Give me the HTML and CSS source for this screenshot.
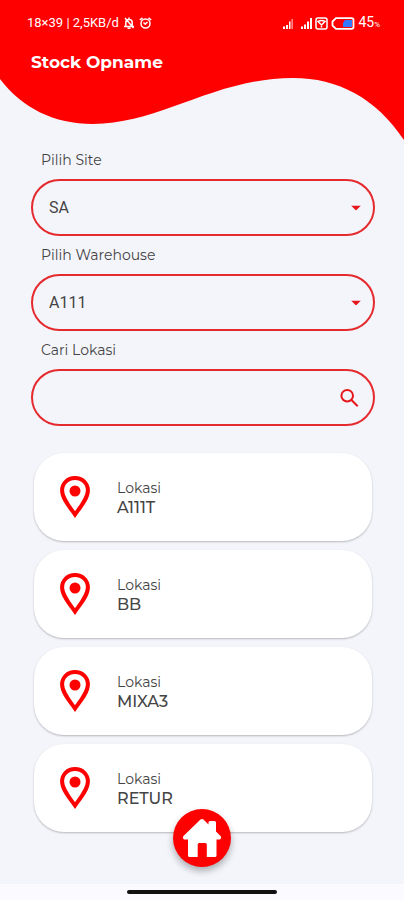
FILE: index.html
```html
<!DOCTYPE html>
<html lang="id">
<head>
<meta charset="utf-8">
<meta name="viewport" content="width=device-width, initial-scale=1">
<title>Stock Opname</title>
<link rel="stylesheet" href="styles.css">
</head>
<body>
<svg class="sprite" aria-hidden="true">
  <symbol id="pin" viewBox="0 0 30 44">
    <path d="M15 3C7.500 3 2.100 8.500 2.100 15.500C2.100 23.500 10 32.500 15 39.500C20 32.500 27.900 23.500 27.900 15.500C27.900 8.500 22.500 3 15 3Z" fill="none" stroke="#fe0000" stroke-width="4"/>
    <circle cx="15" cy="16" r="5.500" fill="#fe0000"/>
  </symbol>
</svg>
<div class="app">
  <header class="header">
    <svg class="wave" viewBox="0 0 404 140" preserveAspectRatio="none" aria-hidden="true">
      <path d="M0 0H404V140C376 98 338 78 293 78C215 78 160 124 93 124C54 124 22 108 0 79Z" fill="#fe0000"/>
    </svg>
    <div class="status">
      <div class="status-group">
        <span>18×39 | 2,5KB/d</span>
        <svg width="12" height="12" viewBox="0 0 12 12" fill="none" stroke="#fff" stroke-width="1.500" aria-hidden="true">
          <path d="M1 9.500H11M2.800 9V5.500C2.800 1.500 9.200 1.500 9.200 5.500V9M4.500 11.300H7.500M6 .5V2M2 1L10.500 11"/>
        </svg>
        <svg width="13" height="12" viewBox="0 0 13 12" fill="none" stroke="#fff" stroke-width="1.500" aria-hidden="true">
          <circle cx="6.500" cy="6.500" r="4.500"/><path d="M.8 3L3.500 .8M12.200 3L9.500 .8M4.500 5.500L6.300 7.200L8.500 5"/>
        </svg>
      </div>
      <div class="status-group">
        <svg width="11" height="11" viewBox="0 0 11 11" fill="#fff" aria-hidden="true"><path d="M0 8.500H2V11H0ZM3 7H5V11H3ZM6 3.500H7.500V11H6Z"/><path d="M8.300 1H10V11H8.300Z" opacity=".5"/></svg>
        <svg class="signal" width="11" height="11" viewBox="0 0 11 11" fill="#fff" aria-hidden="true"><path d="M0 8.500H2V11H0ZM3 6.500H5V11H3ZM6 3.500H8V11H6ZM9 0H11V11H9Z"/></svg>
        <svg width="13" height="13" viewBox="0 0 13 13" fill="none" stroke="#fff" stroke-width="1.500" aria-hidden="true"><rect x="1" y="1" width="11" height="11" rx="2"/><path d="M3 4.500Q6.500 2.500 10 4.500L6.500 8ZM6.500 7V10.500"/></svg>
        <svg width="24" height="13" viewBox="0 0 24 13" aria-hidden="true"><path d="M5 1.200H20.500Q22.500 1.200 22.500 3V10Q22.500 11.800 20.500 11.800H5L1.500 8.500V4.500Z" fill="none" stroke="#fff" stroke-width="1.800"/><path d="M14 3H21V10H12V6Z" fill="#3478ff"/></svg>
        <span class="battery">45<small>%</small></span>
      </div>
    </div>
    <h1 class="title">Stock Opname</h1>
  </header>
  <main class="content">
    <form class="filters">
      <label class="label" for="site">Pilih Site</label>
      <div class="field">
        <select id="site" class="control"><option>SA</option></select>
        <svg class="arrow" width="10" height="5" viewBox="0 0 10 5" aria-hidden="true"><path d="M0 0H10L5 5Z" fill="#e5171b"/></svg>
      </div>
      <label class="label" for="warehouse">Pilih Warehouse</label>
      <div class="field">
        <select id="warehouse" class="control"><option>A111</option></select>
        <svg class="arrow" width="10" height="5" viewBox="0 0 10 5" aria-hidden="true"><path d="M0 0H10L5 5Z" fill="#e5171b"/></svg>
      </div>
      <label class="label" for="search">Cari Lokasi</label>
      <div class="field">
        <input id="search" class="control" type="text">
        <svg class="search" width="19" height="19" viewBox="0 0 19 19" fill="none" stroke="#e5171b" stroke-width="2" aria-hidden="true"><circle cx="7.200" cy="7.200" r="5.800"/><path d="M11.500 11.500L17.700 17.700"/></svg>
      </div>
    </form>
    <ul class="list">
      <li class="card"><svg class="pin" aria-hidden="true"><use href="#pin"/></svg><div class="text"><p class="caption">Lokasi</p><p class="name">A111T</p></div></li>
      <li class="card"><svg class="pin" aria-hidden="true"><use href="#pin"/></svg><div class="text"><p class="caption">Lokasi</p><p class="name">BB</p></div></li>
      <li class="card"><svg class="pin" aria-hidden="true"><use href="#pin"/></svg><div class="text"><p class="caption">Lokasi</p><p class="name">MIXA3</p></div></li>
      <li class="card"><svg class="pin" aria-hidden="true"><use href="#pin"/></svg><div class="text"><p class="caption">Lokasi</p><p class="name">RETUR</p></div></li>
    </ul>
  </main>
  <footer class="footer">
    <button class="home" type="button" aria-label="Beranda">
      <svg width="40" height="40" viewBox="0 0 40 40" fill="#fff" aria-hidden="true"><path d="M18.500 1.600Q20 .2 21.500 1.600L26.500 6.400V4.500Q26.500 3 28 3H32.500Q34 3 34 4.500V13.500L38.800 18.200Q40 20 38 21.500H34.500V37.500Q34.500 39 33 39H24.800V26.500Q24.800 25 23.300 25H17.200Q15.700 25 15.700 26.500V39H7.500Q6 39 6 37.500V21.500H2Q0 20 1.200 18.200Z"/></svg>
    </button>
    <div class="gesture"></div>
  </footer>
</div>
</body>
</html>
```
FILE: styles.css
```css
* { box-sizing: border-box; }

body {
  margin: 0;
  background: #f4f5fb;
  color: #444;
  font-family: Montserrat, Inter, sans-serif;
}

h1, p, ul { margin: 0; padding: 0; }

.sprite { position: absolute; width: 0; height: 0; }

.app {
  display: flex;
  flex-direction: column;
  min-height: 100vh;
}

.header {
  position: relative;
  height: 140px;
  padding: 14px 24px 0 27px;
  color: #fff;
}

.wave {
  position: absolute;
  inset: 0;
  z-index: -1;
  width: 100%;
  height: 100%;
}

.status {
  display: flex;
  justify-content: space-between;
  height: 18px;
  font: 13px/18px Roboto, sans-serif;
}

.status-group {
  display: flex;
  align-items: center;
  gap: 4px;
}

.status-group + .status-group { gap: 3px; }
.battery { font-size: 14px; }
.status small { font-size: 8px; }
.signal { margin-left: 4px; }

.title {
  margin: 18px 4px 0;
  font-size: 17px;
  font-weight: 700;
  line-height: 24px;
}

.content { padding: 10px 29px 0 31px; }

.filters {
  display: flex;
  flex-direction: column;
  gap: 9px;
}

.label {
  padding-left: 10px;
  font-size: 14px;
  line-height: 20px;
}

.field {
  position: relative;
  height: 57px;
}

.control {
  width: 100%;
  height: 100%;
  padding: 0 48px 0 16px;
  border: 2px solid #e52a2e;
  border-radius: 29px;
  outline: 0;
  background: transparent;
  color: #444;
  font: 16px Roboto, sans-serif;
  appearance: none;
}

.arrow, .search {
  position: absolute;
  top: 50%;
  right: 14px;
  transform: translateY(-50%);
  pointer-events: none;
}

.search { right: 16px; }

.list {
  display: flex;
  flex-direction: column;
  gap: 9px;
  margin: 27px 3px 0;
  list-style: none;
}

.card {
  display: flex;
  align-items: center;
  gap: 27px;
  height: 88px;
  padding-left: 26px;
  border-radius: 30px;
  background: #fff;
  box-shadow: 0 1px 2px rgba(0, 0, 0, .25);
}

.pin { width: 30px; height: 44px; }

.text { padding-top: 1px; }

.caption {
  font-size: 14px;
  line-height: 20px;
}

.name {
  font-size: 16px;
  font-weight: 500;
  line-height: 20px;
}

.footer {
  position: relative;
  display: flex;
  justify-content: center;
  align-items: center;
  height: 16px;
  margin-top: auto;
  background: #fafaff;
}

.home {
  position: absolute;
  bottom: 33px;
  display: flex;
  justify-content: center;
  align-items: center;
  width: 58px;
  height: 58px;
  padding: 0;
  border: 0;
  border-radius: 50%;
  background: #fe0000;
  box-shadow: 0 4px 7px rgba(0, 0, 0, .3);
}

.gesture {
  width: 37%;
  height: 4px;
  border-radius: 2px;
  background: #111;
}
```
